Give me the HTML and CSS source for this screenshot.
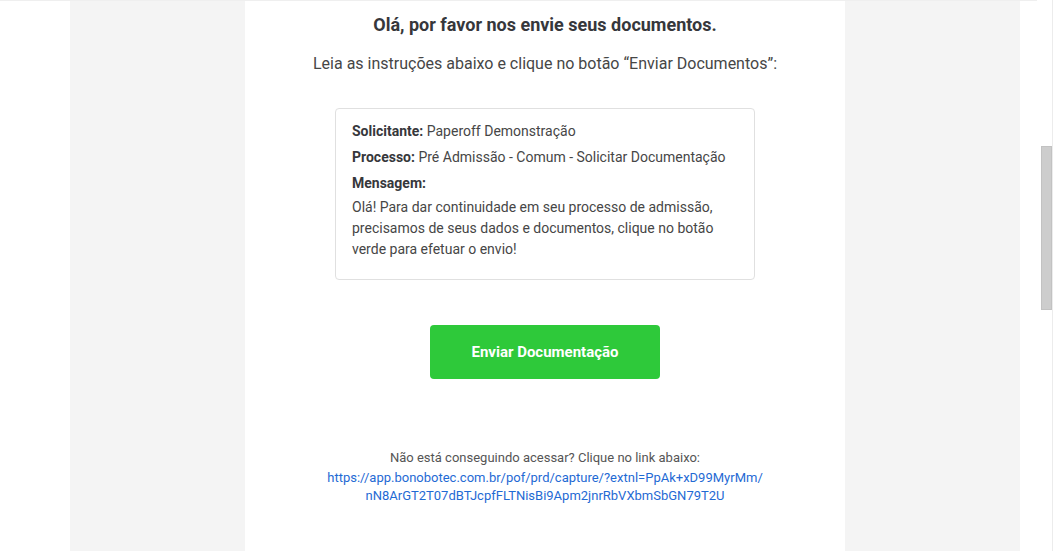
FILE: index.html
```html
<!DOCTYPE html>
<html lang="pt-BR">
<head>
  <meta charset="UTF-8" />
  <title>Envio de documentos – Paperoff</title>
  <meta name="viewport" content="width=device-width, initial-scale=1" />
  <link rel="stylesheet" href="styles.css">
</head>
<body>
  <div class="page">
    <main class="viewport">
      <div class="mail-bg">
        <section class="mail">
          <h1>Olá, por favor nos envie seus documentos.</h1>
          <p class="lead">Leia as instruções abaixo e clique no botão “Enviar Documentos”:</p>

          <div class="info-card">
            <p><strong>Solicitante:</strong> Paperoff Demonstração</p>
            <p><strong>Processo:</strong> Pré Admissão - Comum - Solicitar Documentação</p>
            <p class="label"><strong>Mensagem:</strong></p>
            <p class="message">Olá! Para dar continuidade em seu processo de admissão, precisamos de seus dados e documentos, clique no botão verde para efetuar o envio!</p>
          </div>

          <a class="send-btn" href="#">Enviar Documentação</a>

          <div class="fallback">
            <p>Não está conseguindo acessar? Clique no link abaixo:</p>
            <a href="#">https://app.bonobotec.com.br/pof/prd/capture/?extnl=PpAk+xD99MyrMm/<br>nN8ArGT2T07dBTJcpfFLTNisBi9Apm2jnrRbVXbmSbGN79T2U</a>
          </div>
        </section>
      </div>
    </main>
    <div class="scrollbar" aria-hidden="true">
      <div class="scrollbar-thumb"></div>
    </div>
  </div>
</body>
</html>
```

FILE: styles.css
```css
:root {
  --text-dark: #36373b;
  --text: #464646;
  --text-muted: #555;
  --side-bg: #f4f4f4;
  --border: #e0e0e0;
  --green: #2ec93a;
  --link: #1f6ad4;
}
*, *::before, *::after {
  box-sizing: border-box;
}
html, body {
  height: 100%;
}
body {
  margin: 0;
  font-family: Roboto, 'Liberation Sans', Arial, sans-serif;
  color: var(--text);
  background: #fff;
  overflow: hidden;
}
.page {
  display: flex;
  height: 100%;
}
.viewport {
  flex: 1;
  display: flex;
  padding: 0 17px 0 70px;
  border-top: 1px solid #efefef;
}
.mail-bg {
  flex: 1;
  display: flex;
  justify-content: center;
  background: var(--side-bg);
}
.mail {
  width: 600px;
  background: #fff;
  text-align: center;
  padding-top: 12px;
}
h1 {
  margin: 0;
  font-size: 18px;
  line-height: 24px;
  font-weight: 700;
  color: var(--text-dark);
}
.lead {
  margin: 15px 0 0;
  font-size: 16px;
  line-height: 24px;
  color: var(--text);
}
.info-card {
  width: 420px;
  margin: 32px auto 0;
  padding: 12px 16px 19px;
  border: 1px solid var(--border);
  border-radius: 4px;
  text-align: left;
  font-size: 14px;
  line-height: 20px;
  color: var(--text);
}
.info-card p {
  margin: 0 0 6px;
}
.info-card strong {
  color: var(--text-dark);
  font-weight: 700;
}
.info-card .label {
  margin-bottom: 4px;
}
.info-card .message {
  margin: 0;
  line-height: 21px;
}
.send-btn {
  display: flex;
  align-items: center;
  justify-content: center;
  width: 230px;
  height: 54px;
  margin: 45px auto 0;
  background: var(--green);
  color: #fff;
  border-radius: 4px;
  font-size: 15px;
  font-weight: 700;
  text-decoration: none;
}
.fallback {
  margin-top: 70px;
  font-size: 13px;
  line-height: 18px;
}
.fallback p {
  margin: 0 0 2px;
  color: var(--text-muted);
}
.fallback a {
  color: var(--link);
  text-decoration: none;
}
.scrollbar {
  width: 16px;
  padding-left: 4px;
  border-right: 1px solid #ececec;
  background: #fff;
}
.scrollbar-thumb {
  width: 11px;
  height: 164px;
  margin-top: 146px;
  background: #cdcdcd;
  border: 1px solid #c2c2c2;
}
```
